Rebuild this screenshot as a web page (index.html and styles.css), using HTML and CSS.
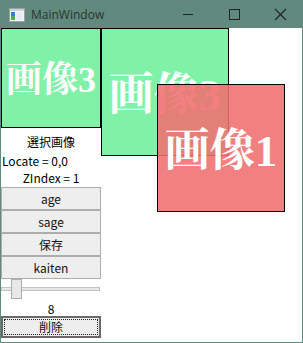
FILE: index.html
```html
<!DOCTYPE html>
<html lang="ja">
<head>
    <meta charset="UTF-8">
    <title>MainWindow</title>
    <link rel="stylesheet" href="styles.css">
</head>
<body>
    <div class="window">
        <div class="titlebar">
            <svg class="app-icon" width="16" height="14" viewBox="0 0 16 14">
                <rect x="0.5" y="0.5" width="15" height="13" fill="#f4f4f4" stroke="#9aa0a6"/>
                <rect x="1" y="1" width="14" height="2" fill="#c9d3dc"/>
                <rect x="2" y="4" width="4" height="8" fill="#3a7bd5"/>
                <rect x="2" y="8" width="4" height="4" fill="#4caf50"/>
                <rect x="7" y="4" width="7" height="8" fill="#e6ecf1"/>
            </svg>
            <span class="title">MainWindow</span>
            <div class="controls">
                <svg width="46" height="28" viewBox="0 0 46 28"><line x1="18" y1="14.5" x2="28" y2="14.5" stroke="#222" stroke-width="1"/></svg>
                <svg width="46" height="28" viewBox="0 0 46 28"><rect x="18.5" y="9.5" width="10" height="10" fill="none" stroke="#222" stroke-width="1"/></svg>
                <svg width="46" height="28" viewBox="0 0 46 28"><path d="M18 9 L29 20 M29 9 L18 20" stroke="#222" stroke-width="1.1"/></svg>
            </div>
        </div>

        <div class="client">
            <div class="panel">
                <div class="picture green small">画像3</div>
                <div class="label caption">選択画像</div>
                <div class="label locate">Locate = 0,0</div>
                <div class="label zindex">ZIndex = 1</div>
                <button class="btn">age</button>
                <button class="btn">sage</button>
                <button class="btn">保存</button>
                <button class="btn">kaiten</button>
                <div class="slider">
                    <div class="track"></div>
                    <div class="thumb"></div>
                </div>
                <div class="label value">8</div>
                <button class="btn default"><span class="focus">削除</span></button>
            </div>

            <div class="picture green big canvas-a">画像3</div>
            <div class="picture red big canvas-b">画像1</div>
        </div>
    </div>
</body>
</html>
```

FILE: styles.css
```css
body {
    margin: 0;
    background-color: #ffffff;
    font-family: "Noto Sans CJK JP", "Noto Sans", sans-serif;
}
.window {
    width: 303px;
    height: 343px;
    background-color: #608a7d;
    display: flex;
    flex-direction: column;
}
.titlebar {
    height: 28px;
    display: flex;
    align-items: center;
    flex-shrink: 0;
}
.app-icon {
    margin-left: 9px;
    margin-top: 1px;
}
.title {
    margin-left: 6px;
    font-family: "Open Sans", "Noto Sans", sans-serif;
    font-size: 12px;
    color: #2a3430;
}
.controls {
    margin-left: auto;
    display: flex;
}
.controls svg {
    display: block;
}
.client {
    position: relative;
    margin: 0 1px 1px 1px;
    flex: 1;
    background-color: #ffffff;
    overflow: hidden;
}
.panel {
    width: 100px;
    display: flex;
    flex-direction: column;
}
.picture {
    box-sizing: border-box;
    border: 1px solid #000;
    color: #fff;
    display: flex;
    align-items: center;
    justify-content: center;
    font-family: "Liberation Serif", "Noto Serif CJK JP", "Noto Sans CJK JP", serif;
    font-weight: bold;
    white-space: nowrap;
}
.green {
    background-color: #7ff2a8;
}
.red {
    background-color: rgba(240, 110, 110, 0.88);
}
.small {
    width: 100px;
    height: 100px;
    font-size: 36px;
    padding-bottom: 4px;
}
.big {
    width: 128px;
    height: 128px;
    font-size: 45px;
}
.canvas-a {
    position: absolute;
    left: 100px;
    top: 0;
    padding-bottom: 4px;
}
.canvas-b {
    position: absolute;
    left: 156px;
    top: 56px;
    padding-bottom: 4px;
}
.label {
    font-size: 12px;
    color: #000;
    line-height: 16px;
}
.caption {
    text-align: center;
    padding: 6px 0 2px;
}
.locate {
    height: 18px;
    line-height: 18px;
    padding-left: 1px;
}
.zindex {
    text-align: center;
    height: 17px;
}
.btn {
    box-sizing: border-box;
    width: 100px;
    height: 23px;
    margin: 0;
    padding: 0;
    border: 1px solid #adadad;
    background-color: #eeeeee;
    font-family: "Noto Sans CJK JP", "Noto Sans", sans-serif;
    font-size: 12px;
    color: #111;
}
.slider {
    position: relative;
    height: 22px;
}
.track {
    position: absolute;
    left: 0;
    right: 1px;
    top: 8px;
    height: 2px;
    background-color: #e7e7e7;
    border: 1px solid #c4c4c4;
}
.thumb {
    position: absolute;
    left: 10px;
    top: 0;
    width: 9px;
    height: 18px;
    background-color: #e8e8e8;
    border: 1px solid #adadad;
}
.value {
    text-align: center;
    height: 15px;
}
.default {
    border: 2px solid #6a6a6a;
    height: 22px;
    padding: 1px;
}
.focus {
    display: block;
    height: 100%;
    box-sizing: border-box;
    border: 1px dotted #222;
    line-height: 14px;
}
```
